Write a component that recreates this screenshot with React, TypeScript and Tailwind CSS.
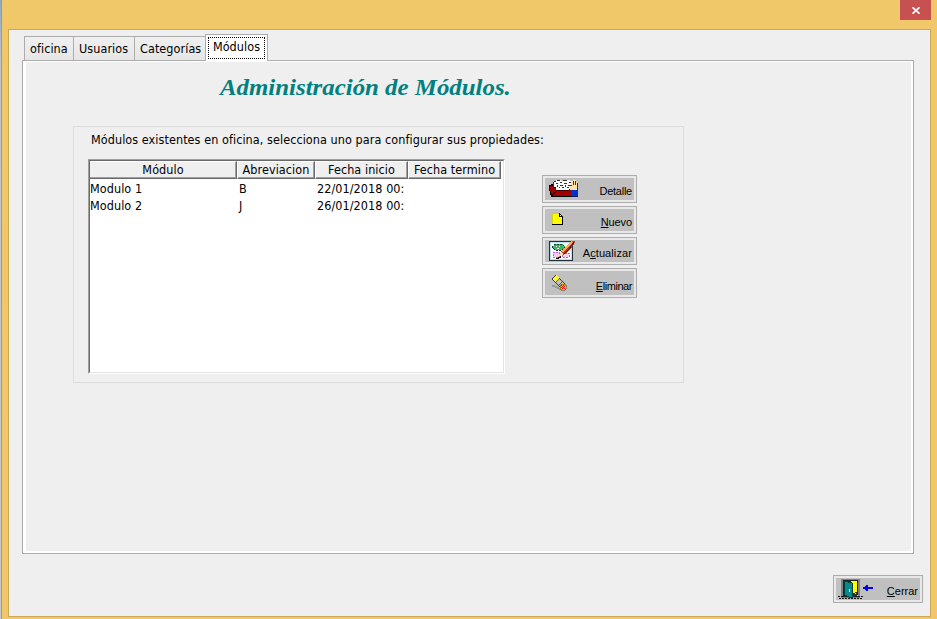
import React from 'react';

const ui = "font-['DejaVu_Sans_Condensed','DejaVu_Sans',sans-serif] [font-stretch:condensed]";

function DetailIcon() {
  return (
    <svg width="30" height="20" viewBox="0 0 30 20" shapeRendering="crispEdges">
      <path d="M0 6h2V5h4v3h16v10H2v-2H1v-4H0z" fill="#000" />
      <path d="M5 2h2V1h5v1h3V1h6v1h3v9H7V8H5z" fill="#fff" />
      <path d="M5 2h2v1H5zM8 1h3v1H8zM14 1h4v1h-4zM7 4h2v1H7zM11 3h2v1h-2zM15 4h3v1h-3zM20 3h2v1h-2zM8 6h1v2H8zM11 6h3v1h-3zM16 6h1v2h-1zM19 6h2v1h-2zM10 8h1v1h-1zM13 8h2v1h-2zM18 8h2v1h-2zM4 3h1v5H4z" fill="#333" />
      <path d="M1 7h4v2h2v2h12l3-2v8H3v-2H2v-3H1z" fill="#a00000" />
      <path d="M7 11h12l3-2v1l-3 2H8l-4 5H3v-1z" fill="#400" />
      <path d="M22 2h2V1h3v2h1v8h-7V7h1z" fill="#ffe3aa" />
      <path d="M21 6h2v1h-2zM24 2h1v4h-1zM26 2h1v4h-1zM28 4h1v7h-1z" fill="#333" />
      <path d="M22 11h7v6h-7z" fill="#0036c8" />
      <path d="M22 17h7v1h-7z" fill="#001a65" />
    </svg>
  );
}

function NewIcon() {
  return (
    <svg width="12" height="14" viewBox="0 0 12 14" shapeRendering="crispEdges">
      <path d="M0 1h8v1h1v1h1v1h1v9H0z" fill="#ff0" />
      <path d="M0 1h7v1H0zM0 1h1v11H0z" fill="#d5d500" />
      <path d="M7 1h1v1h1v1h1v1h1v9H0v-1h10V5H7z" fill="#000" />
      <path d="M8 3h1v1H8z" fill="#fff" />
    </svg>
  );
}

function UpdateIcon() {
  return (
    <svg width="27" height="21" viewBox="0 0 27 21" shapeRendering="crispEdges">
      <path d="M0 0h24v20H0z" fill="#22303c" />
      <path d="M1 1h22v18H1z" fill="#b9dff0" />
      <path d="M2 2h20v16H2z" fill="#fff" />
      <path d="M3 6l3-3h7l3 3-3 3H6z" fill="#35b565" stroke="#123d21" strokeDasharray="2 1" />
      <path d="M7 5h1v1H7zM10 5h1v1h-1zM8 7h2v1H8z" fill="#fff" />
      <path d="M4 11h6v5H4zM13 12h7v4h-7z" fill="#f2cdf5" stroke="#c45ad4" strokeDasharray="2 1" />
      <path d="M9 16l4-7 5-5 6-5 2 2-4 7-6 5z" fill="#b8421c" />
      <path d="M13 11l4-4 6-6" stroke="#ffa468" strokeWidth="2" fill="none" />
      <path d="M15 13l5-5 5-7" stroke="#4d150c" fill="none" />
      <path d="M9 16l3-5 3 2z" fill="#f7d6a8" />
      <path d="M7 17h2v-1h2v-1" stroke="#000" fill="none" />
    </svg>
  );
}

function EraserIcon() {
  return (
    <svg width="18" height="18" viewBox="0 0 18 18" shapeRendering="crispEdges">
      <path d="M1 11h3v1h2v1h2v1h2v2H8v-1H6v-1H4v-1H1z" fill="#969696" />
      <path d="M5 1L1 5l9 9 4-4z" fill="#c4c4b4" stroke="#333" />
      <path d="M5 1L1 5l3 3 4-4z" fill="#ff0" />
      <path d="M3 3l3 3M2 5l2 2" stroke="#fffbd0" />
      <path d="M5 8l3-3M8 11l3-3" stroke="#55554d" />
      <path d="M9 11h1v-1h4v1h1v4h-1v1h-4v-1H9z" fill="#ffc800" stroke="#5a3d00" strokeWidth=".5" />
      <path d="M10 11h1v1h-1zM12 11h1v1h-1zM11 12h1v1h-1zM13 12h1v1h-1zM10 13h1v1h-1zM12 13h1v1h-1zM11 14h1v1h-1zM13 14h1v1h-1z" fill="#e60000" />
    </svg>
  );
}

function ExitIcon() {
  return (
    <svg width="37" height="22" viewBox="0 0 37 22" shapeRendering="crispEdges">
      <path d="M3 0h19v19H3z" fill="#808080" />
      <path d="M5 1h15v17H5z" fill="#222" />
      <path d="M13 2h6v12h-6z" fill="#ff0" />
      <path d="M6 2l8 2v15l-8-3z" fill="#078a8a" stroke="#003f43" />
      <path d="M11 10h1v3h-1z" fill="#fff" />
      <path d="M15 16h1v-2h1v-1h2v4h2v1h-5z" fill="#333" />
      <path d="M17 14h1v1h-1zM19 16h1v1h-1z" fill="#ddd" />
      <path d="M0 17.5h6M17 17.5h8M1 19.5h24" stroke="#111" strokeDasharray="2 1" />
      <path d="M24 9h1V8h2V7h1V6h2v2h5v2h-5v2h-2v-1h-1v-1h-2V9z" fill="#00f" />
    </svg>
  );
}

function ClassicButton({ children, className, icon, iconClass, labelClass }: { children: React.ReactNode; className: string; icon: React.ReactNode; iconClass: string; labelClass: string }) {
  return (
    <button className={`block border border-[#adadad] bg-[#e8e8e8] p-[2px] font-['Liberation_Sans',Arial,sans-serif] text-[11px] text-black ${className}`}>
      <span className="flex h-full w-full justify-between bg-[#c0c0c0]">
        <span className={`shrink-0 ${iconClass}`}>{icon}</span>
        <span className={`mr-[2px] whitespace-nowrap leading-[13px] underline-offset-1 ${labelClass}`}>{children}</span>
      </span>
    </button>
  );
}

function HeaderCell({ children, className }: { children: React.ReactNode; className: string }) {
  return <div className={`h-[18px] whitespace-nowrap border-b border-r border-t border-b-[#696969] border-r-[#696969] border-t-white bg-[#efefef] text-center leading-[15px] shadow-[inset_-1px_-1px_0_#a0a0a0] ${className}`}>{children}</div>;
}

export default function App() {
  return (
    <div className={`flex h-[619px] w-[937px] overflow-hidden bg-[#f0c869] text-[12.5px] tracking-[0.07px] text-black ${ui}`}>
      <div className="w-[2px] shrink-0 border-r border-[#b5965c] bg-gradient-to-b from-[#8dabc7] via-[#bfc5cb] via-10% to-[#c9cacb]" />
      <div className="flex w-[935px] flex-col">
        <header className="flex h-[29px] justify-end pr-[6px]">
          <button aria-label="Cerrar ventana" className="flex h-5 w-[31px] items-center justify-center bg-[#c75050]">
            <svg width="8" height="7" viewBox="0 0 8 7" fill="none" stroke="#fff" strokeWidth="1.7"><path d="M.5.3l7 6.4M7.5.3l-7 6.4" /></svg>
          </button>
        </header>
        <main className="ml-[6px] h-[588px] w-[923px] border border-[#cca855] bg-[#efefef] pl-[13px] pt-1">
          <div className="relative z-10 flex h-[27px] items-end pl-[2px]">
            <div className="mb-px h-[24px] w-[49px] border-l border-t border-[#acacac] bg-gradient-to-b from-[#f0f0f0] to-[#e6e6e6] pl-[5px] leading-[24px]">oficina</div>
            <div className="mb-px h-[24px] w-[61px] border-l border-t border-[#acacac] bg-gradient-to-b from-[#f0f0f0] to-[#e6e6e6] pl-[5px] leading-[24px]">Usuarios</div>
            <div className="mb-px h-[24px] w-[71px] border-l border-t border-[#acacac] bg-gradient-to-b from-[#f0f0f0] to-[#e6e6e6] pl-[5px] leading-[24px]">Categorías</div>
            <div className="h-[27px] w-[63px] border-x border-t border-[#acacac] bg-white px-[2px] pt-[2px]">
              <div className="h-[22px] w-[57px] border border-dotted border-black text-center leading-[18px]">Módulos</div>
            </div>
          </div>
          <section className="-mt-px h-[494px] w-[892px] border border-[#acacac] bg-white pb-[2px] pl-[3px] pr-[2px] pt-px">
            <div className="h-full bg-[#efefef]">
              <h1 className="h-[64px] pl-[194px] pt-[11px] font-['Liberation_Serif',serif] text-[23px] font-bold italic leading-[30px] tracking-normal text-[#008080]"><span className="inline-block origin-left scale-x-[1.081]">Administración de Módulos.</span></h1>
              <section className="ml-[47px] h-[257px] w-[611px] border border-[#dcdcdc] pl-[14px] pt-[5px]">
                <p className="ml-[3px] h-[27px] whitespace-nowrap leading-[15px]">Módulos existentes en oficina, selecciona uno para configurar sus propiedades:</p>
                <div className="flex">
                  <div className="h-[215px] w-[417px] border border-b-white border-l-[#a0a0a0] border-r-white border-t-[#a0a0a0]">
                    <div className="h-[213px] w-[415px] border border-b-[#e3e3e3] border-l-[#696969] border-r-[#e3e3e3] border-t-[#696969] bg-white">
                      <div className="flex">
                        <HeaderCell className="w-[147px]">Módulo</HeaderCell>
                        <HeaderCell className="w-[78px] border-l border-l-white">Abreviacion</HeaderCell>
                        <HeaderCell className="w-[93px] border-l border-l-white">Fecha inicio</HeaderCell>
                        <HeaderCell className="w-[93px] border-l border-l-white">Fecha termino</HeaderCell>
                      </div>
                      <div className="grid grid-cols-[149px_78px_1fr] pt-[1px] leading-[17px]">
                        <span>Modulo 1</span><span>B</span><span>22/01/2018 00:</span>
                        <span>Modulo 2</span><span>J</span><span>26/01/2018 00:</span>
                      </div>
                    </div>
                  </div>
                  <div className="ml-[37px] mt-4 flex w-[95px] flex-col gap-[3px]">
                    <ClassicButton className="h-[28px]" iconClass="ml-[4px] mt-[1px]" labelClass="mt-[7px] tracking-[-0.25px]" icon={<DetailIcon />}>Detalle</ClassicButton>
                    <ClassicButton className="h-[28px]" iconClass="ml-[7px] mt-[3px]" labelClass="mt-[7px] tracking-[-0.1px]" icon={<NewIcon />}><u>N</u>uevo</ClassicButton>
                    <ClassicButton className="h-[28px]" iconClass="ml-[4px] mt-[1px]" labelClass="mt-[7px] tracking-[0.1px]" icon={<UpdateIcon />}>A<u>c</u>tualizar</ClassicButton>
                    <ClassicButton className="h-[30px]" iconClass="ml-[6px] mt-[3px]" labelClass="mt-[9px] tracking-[-0.45px]" icon={<EraserIcon />}><u>E</u>liminar</ClassicButton>
                  </div>
                </div>
              </section>
            </div>
          </section>
          <ClassicButton className="ml-[811px] mt-[21px] h-[28px] w-[90px]" iconClass="ml-[2px] mt-[1px]" labelClass="mt-[7px] tracking-normal" icon={<ExitIcon />}><u>C</u>errar</ClassicButton>
        </main>
      </div>
    </div>
  );
}
